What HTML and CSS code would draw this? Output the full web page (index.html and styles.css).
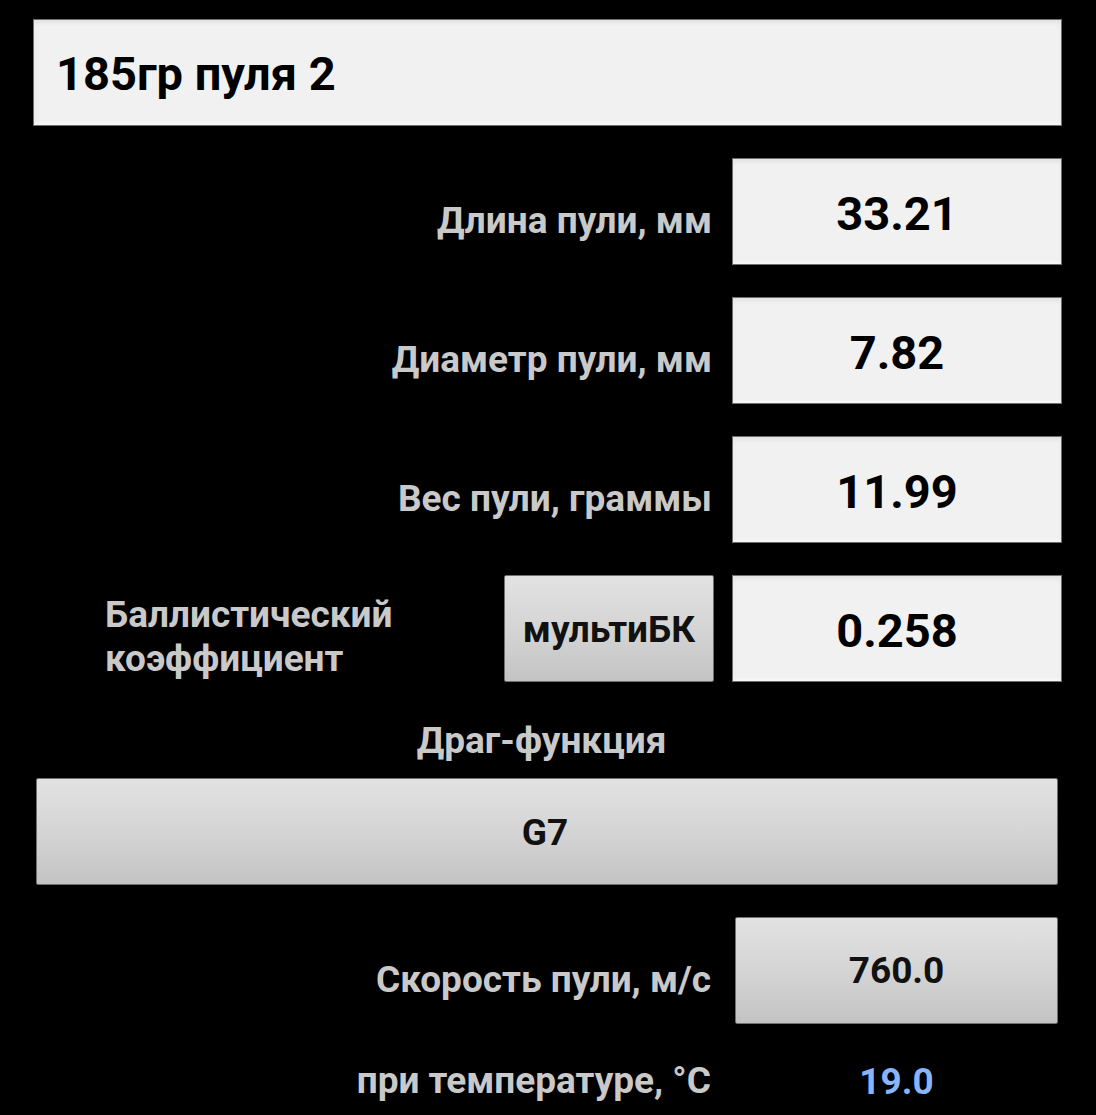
FILE: index.html
```html
<!DOCTYPE html>
<html lang="ru">
<head>
<meta charset="utf-8">
<title>Пуля</title>
<link rel="stylesheet" href="styles.css">
</head>
<body>
<main class="screen">
  <div class="field name-field">185гр пуля 2</div>

  <div class="row">
    <div class="label">Длина пули, мм</div>
    <div class="field value">33.21</div>
  </div>
  <div class="row">
    <div class="label">Диаметр пули, мм</div>
    <div class="field value">7.82</div>
  </div>
  <div class="row">
    <div class="label">Вес пули, граммы</div>
    <div class="field value">11.99</div>
  </div>
  <div class="row bc-row">
    <div class="label label-left">Баллистический<br>коэффициент</div>
    <div class="btn multi-btn">мультиБК</div>
    <div class="field value">0.258</div>
  </div>

  <div class="section-title">Драг-функция</div>
  <div class="btn wide-btn">G7</div>

  <div class="row speed-row">
    <div class="label">Скорость пули, м/с</div>
    <div class="btn speed-btn">760.0</div>
  </div>
  <div class="row temp-row">
    <div class="label">при температуре, °C</div>
    <div class="temp-value">19.0</div>
  </div>
</main>
</body>
</html>
```

FILE: styles.css
```css
html, body {
  margin: 0;
  padding: 0;
  background: #000;
}

body {
  font-family: Roboto, "Noto Sans", "Liberation Sans", sans-serif;
  font-weight: 700;
  color: #000;
}

.screen {
  width: 1096px;
  padding: 19px 34px 0 33px;
  box-sizing: border-box;
  display: flex;
  flex-direction: column;
}

.field {
  background: #f1f1f1;
  border: 1px solid #6e6e6e;
  box-shadow: inset 0 3px 4px rgba(0, 0, 0, 0.06), inset 0 -2px 3px rgba(255, 255, 255, 0.6);
  box-sizing: border-box;
  height: 107px;
  display: flex;
  align-items: center;
}

.name-field {
  padding-left: 22px;
  font-size: 47px;
  padding-top: 2px;
}

.row {
  display: flex;
  align-items: center;
  margin-top: 32px;
  gap: 20px;
}

.label {
  flex: 1;
  text-align: right;
  color: #c9c9c9;
  font-size: 37px;
  line-height: 44px;
  padding-top: 18px;
}

.value {
  width: 330px;
  flex: none;
  justify-content: center;
  font-size: 47px;
  padding-top: 4px;
}

.bc-row {
  gap: 18px;
}

.label-left {
  text-align: left;
  padding-left: 72px;
  padding-top: 17px;
}

.btn {
  background: linear-gradient(to bottom, #e2e2e2 0%, #d3d3d3 55%, #c3c3c3 100%);
  border: 1px solid #707070;
  border-radius: 2px;
  box-sizing: border-box;
  height: 107px;
  display: flex;
  align-items: center;
  justify-content: center;
  color: #111;
}

.multi-btn {
  width: 210px;
  flex: none;
  font-size: 37px;
  padding-top: 2px;
}

.section-title {
  margin-top: 29px;
  text-align: center;
  color: #c9c9c9;
  font-size: 37px;
  line-height: 60px;
  padding-right: 12px;
}

.wide-btn {
  margin: 7px 4px 0 3px;
  font-size: 37px;
  padding-top: 2px;
  padding-right: 4px;
}

.speed-row {
  gap: 24px;
  margin-top: 32px;
}

.speed-btn {
  width: 323px;
  flex: none;
  margin-right: 4px;
  font-size: 37px;
}

.temp-row {
  margin-top: 28px;
  gap: 24px;
  height: 56px;
}

.temp-row .label {
  padding-top: 2px;
}

.temp-value {
  width: 323px;
  margin-right: 4px;
  text-align: center;
  color: #89b4f8;
  font-size: 37px;
  padding-top: 2px;
}
```
